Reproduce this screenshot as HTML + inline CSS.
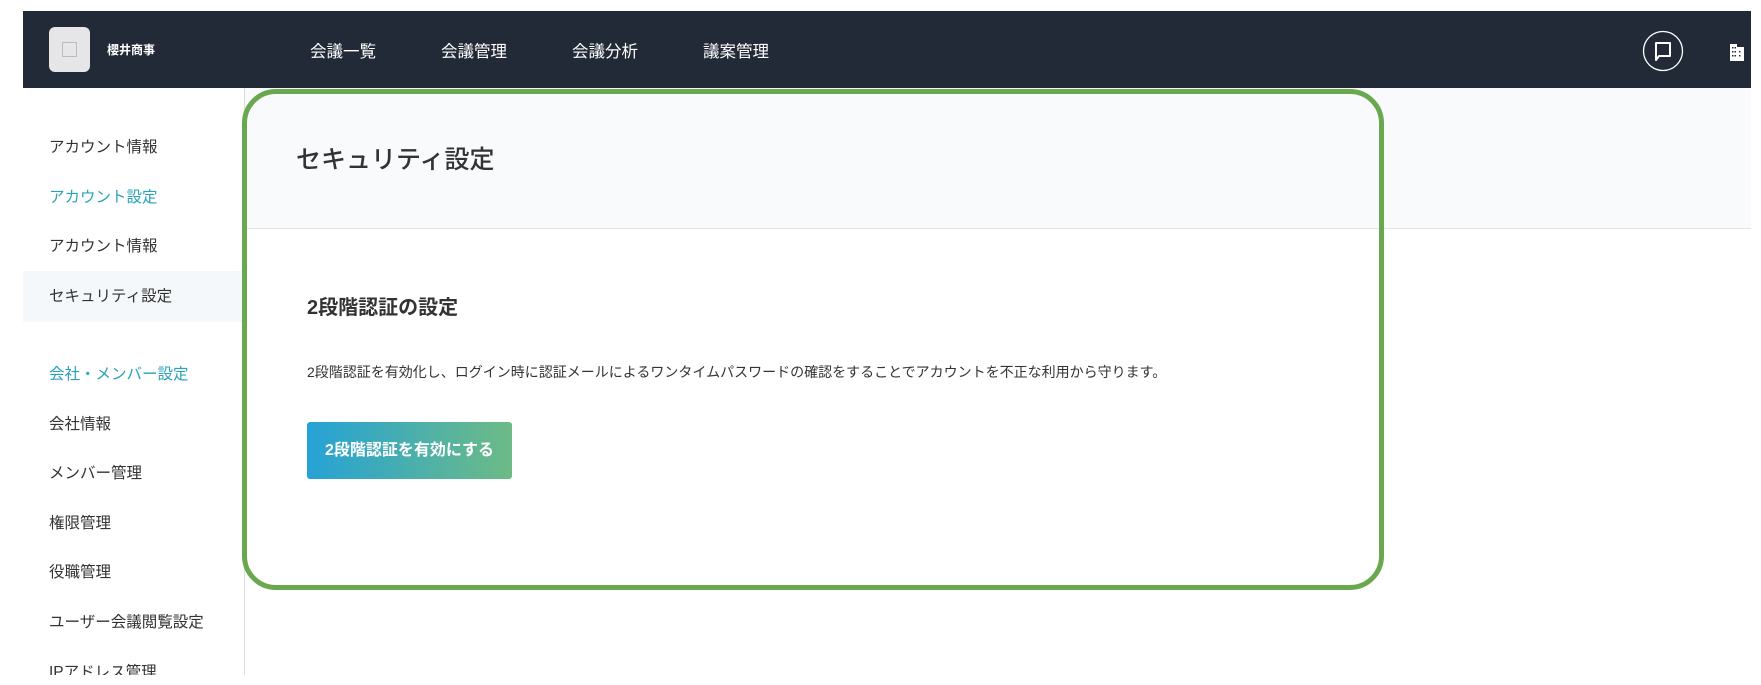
<!DOCTYPE html>
<html><head><meta charset="utf-8"><style>
*{margin:0;padding:0;box-sizing:border-box}
body{width:1761px;height:685px;background:#fff;font-family:"Liberation Sans","Noto Sans CJK JP",sans-serif;position:relative;overflow:hidden;color:#333}
.hdr{position:absolute;left:23px;top:11px;width:1728px;height:77px;background:#222a37}
.logo{position:absolute;left:26px;top:16px;width:41px;height:45px;background:#e6e6e8;border-radius:6px}
.logo i{position:absolute;left:13px;top:15px;width:15px;height:15px;border:1px solid #bbb}
.cname{position:absolute;left:84px;top:30px;color:#fff;font-size:12px;font-weight:bold}
.nav{position:absolute;top:27px;color:#fff;font-size:16.5px}
.side{position:absolute;left:23px;top:88px;width:222px;height:587px;border-right:1px solid #ddd}
.si{position:absolute;left:26px;font-size:15.5px;color:#333}
.t{color:#2aa3b8}
.sel{position:absolute;left:0;top:183px;width:221px;height:51px;background:#f4f8fa}
.mh{position:absolute;left:245px;top:88px;width:1506px;height:141px;background:#f8fafc;border-bottom:1px solid #e2e5e8}
.title{position:absolute;left:296px;top:140px;font-size:25px;color:#333;font-weight:500}
.h2{position:absolute;left:307px;top:291px;font-size:20px;font-weight:bold;color:#333}
.desc{position:absolute;left:307px;top:362px;font-size:14px;color:#333}
.btn{position:absolute;left:307px;top:422px;width:205px;height:57px;border-radius:3px;background:linear-gradient(90deg,#25a2d6,#6dbb85);color:#fff;font-weight:bold;font-size:16px;line-height:57px;text-align:center}
.frame{position:absolute;left:242px;top:89px;width:1142px;height:501px;border:5px solid #6aa84f;border-radius:34px}
</style></head><body>
<div class="hdr">
<div class="logo"><i></i></div>
<div class="cname">櫻井商事</div>
<div class="nav" style="left:287px">会議一覧</div>
<div class="nav" style="left:418px">会議管理</div>
<div class="nav" style="left:549px">会議分析</div>
<div class="nav" style="left:680px">議案管理</div>
<svg style="position:absolute;left:1619px;top:19px" width="42" height="42" viewBox="0 0 42 42"><circle cx="21" cy="21" r="19.5" fill="none" stroke="#fff" stroke-width="1.3"/><path d="M14 13h14v13H17l-3 4z" fill="none" stroke="#fff" stroke-width="2" stroke-linejoin="round"/></svg>
<svg style="position:absolute;left:1706px;top:32px" width="16" height="18" viewBox="0 0 16 18"><path d="M1 1h7v3h7v14H1z" fill="#fff"/><g fill="#222a37"><rect x="3" y="4" width="1.5" height="1.5"/><rect x="5.5" y="4" width="1.5" height="1.5"/><rect x="3" y="8" width="1.5" height="1.5"/><rect x="5.5" y="8" width="1.5" height="1.5"/><rect x="3" y="12" width="1.5" height="1.5"/><rect x="5.5" y="12" width="1.5" height="1.5"/><rect x="10" y="8" width="1.5" height="1.5"/><rect x="10" y="12" width="1.5" height="1.5"/></g></svg>
</div>
<div class="side">
<div class="sel"></div>
<div class="si" style="top:47px">アカウント情報</div>
<div class="si t" style="top:97px">アカウント設定</div>
<div class="si" style="top:146px">アカウント情報</div>
<div class="si" style="top:196px">セキュリティ設定</div>
<div class="si t" style="top:274px">会社・メンバー設定</div>
<div class="si" style="top:324px">会社情報</div>
<div class="si" style="top:373px">メンバー管理</div>
<div class="si" style="top:423px">権限管理</div>
<div class="si" style="top:472px">役職管理</div>
<div class="si" style="top:522px">ユーザー会議閲覧設定</div>
<div class="si" style="top:572px;height:15px;overflow:hidden">IPアドレス管理</div>
</div>
<div class="mh"></div>
<div class="title">セキュリティ設定</div>
<div class="h2">2段階認証の設定</div>
<div class="desc">2段階認証を有効化し、ログイン時に認証メールによるワンタイムパスワードの確認をすることでアカウントを不正な利用から守ります。</div>
<div class="btn">2段階認証を有効にする</div>
<div class="frame"></div>
</body></html>
